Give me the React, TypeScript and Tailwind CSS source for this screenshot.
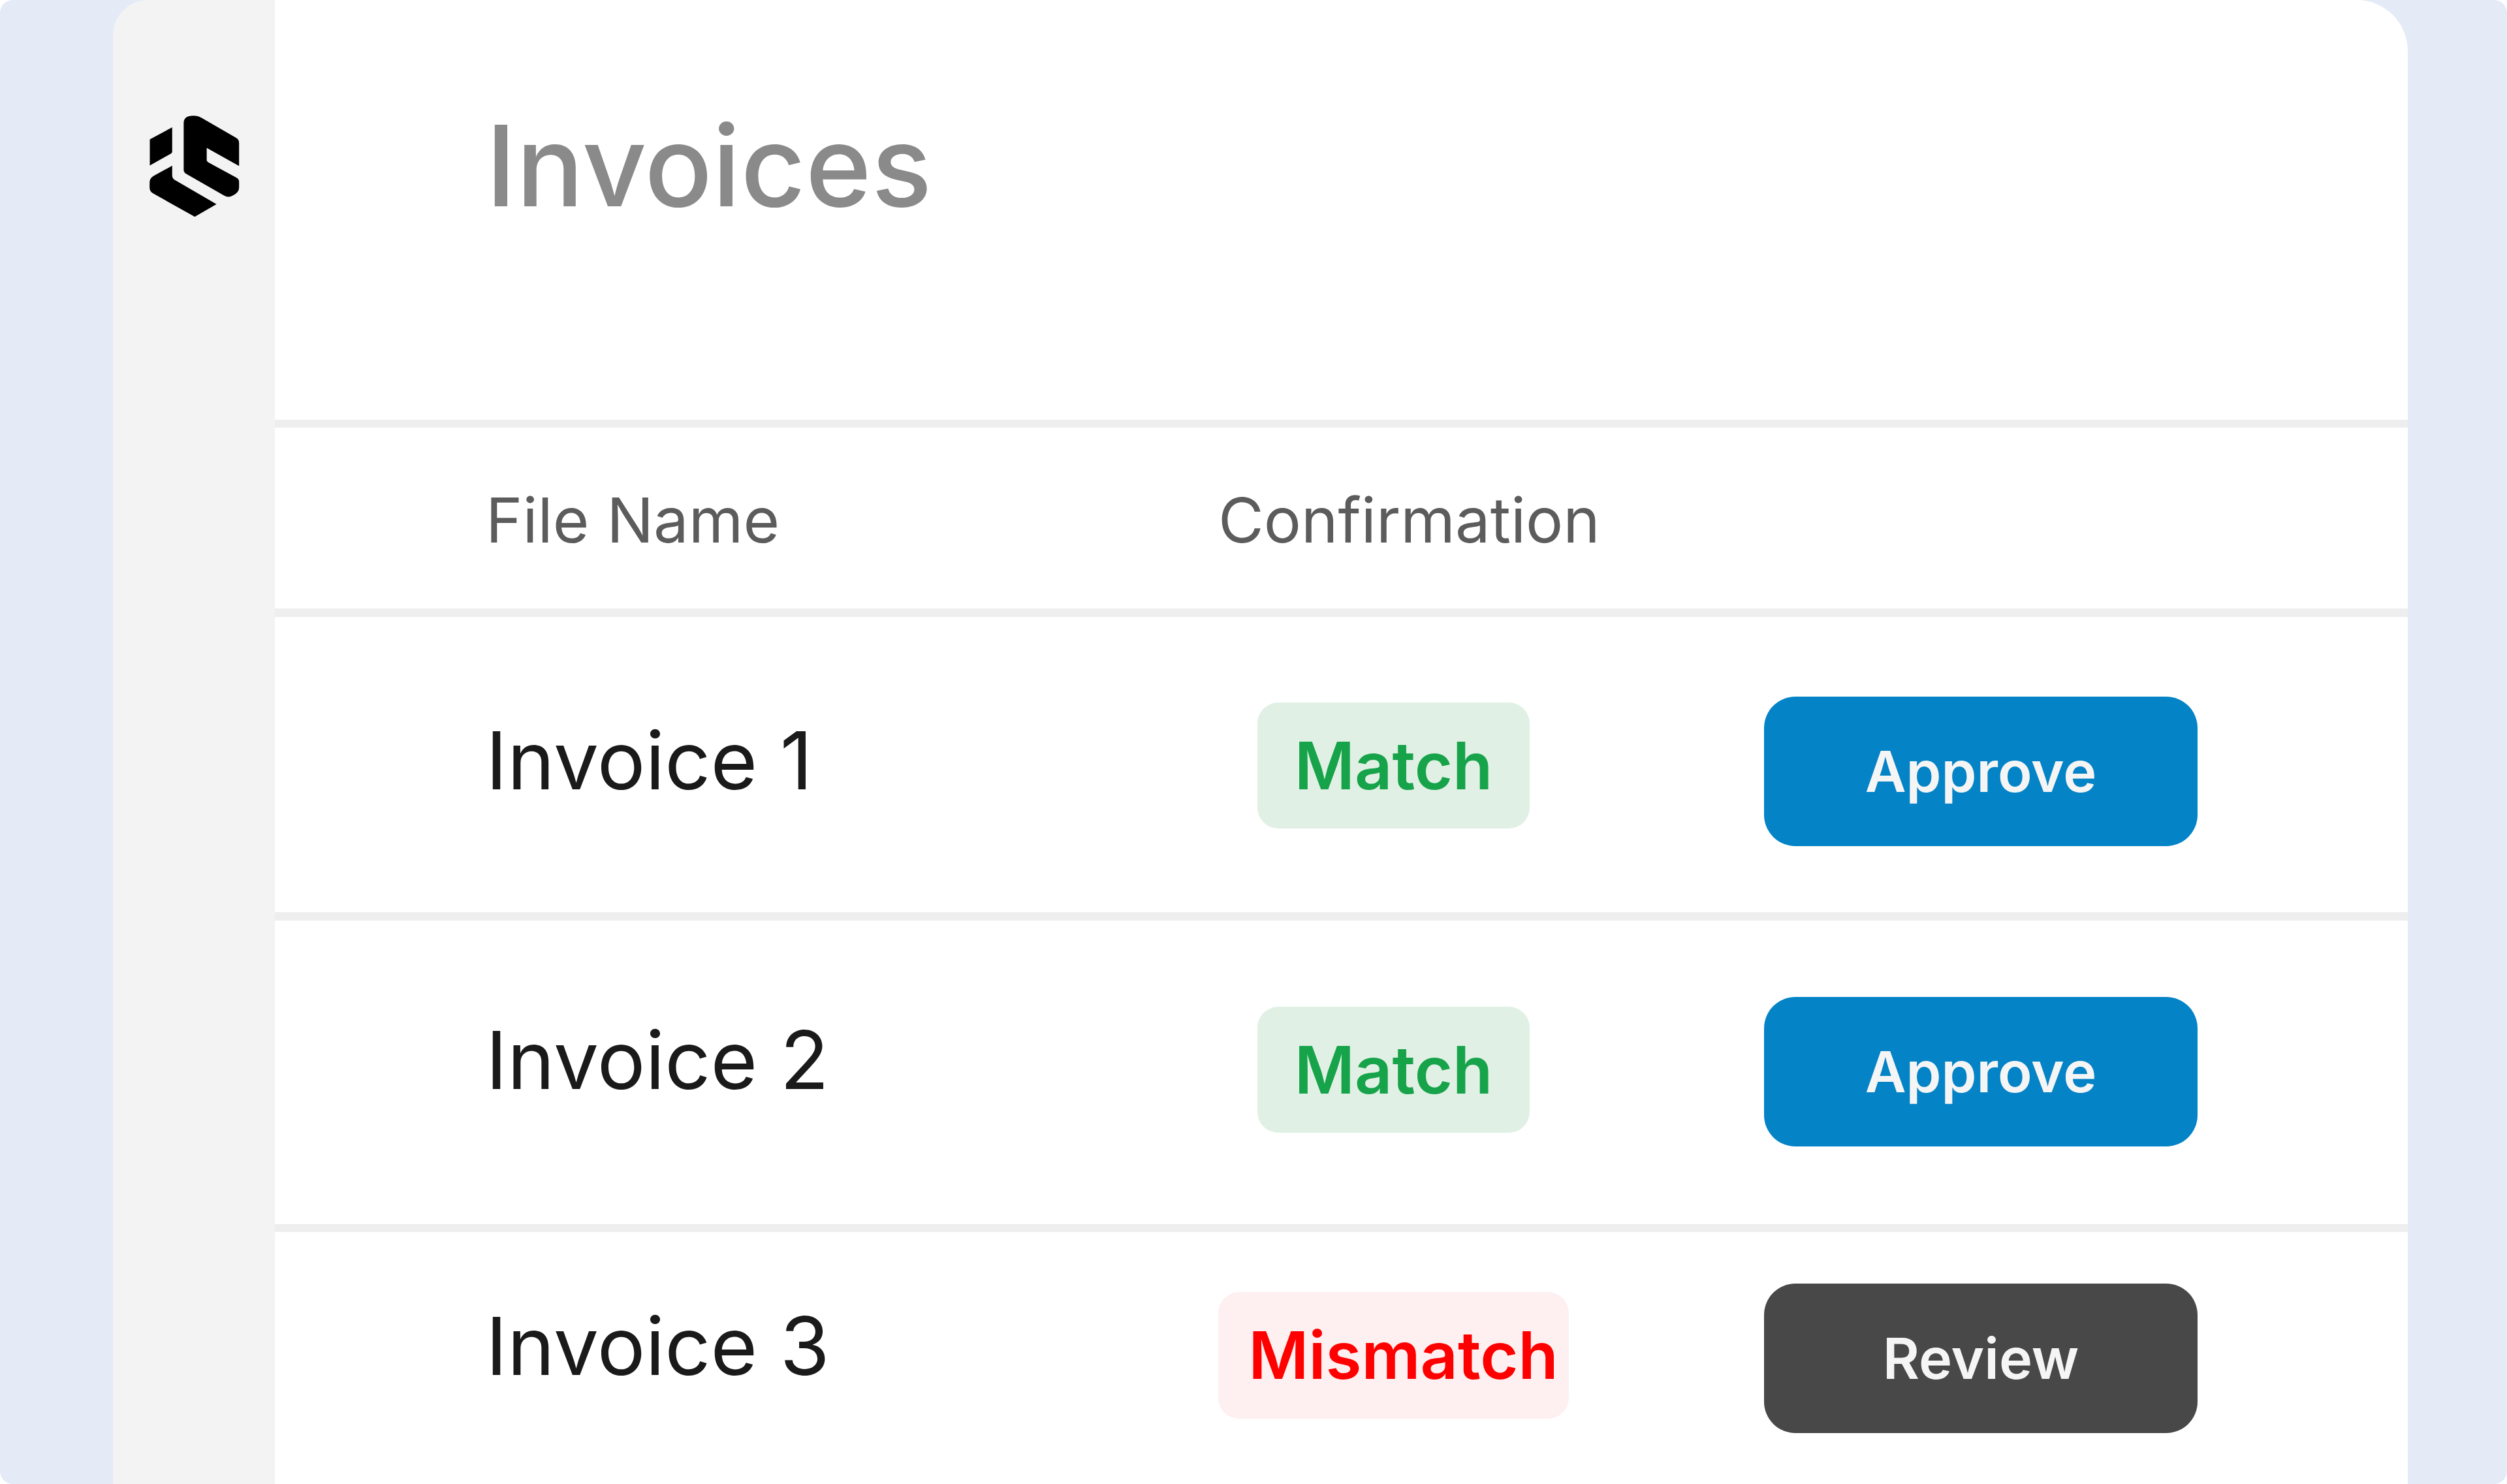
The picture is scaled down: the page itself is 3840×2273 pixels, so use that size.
const rows = [
  { name: "Invoice 1", status: "Match", action: "Approve", height: "h-[452px]", textTop: "pt-[141px]", badgeTop: "mt-[131px]", buttonTop: "mt-[122px]" },
  { name: "Invoice 2", status: "Match", action: "Approve", height: "h-[465px]", textTop: "pt-[135px]", badgeTop: "mt-[132px]", buttonTop: "mt-[117px]" },
  { name: "Invoice 3", status: "Mismatch", action: "Review", height: "h-[386px]", textTop: "pt-[96px]", badgeTop: "mt-[92px]", buttonTop: "mt-[79px]" },
];

function Logo() {
  return (
    <svg width="138" height="155" viewBox="207 530 414 466" fill="#000">
      <path d="M311 584 L208 640 V760 L300 708 Q311 703 311 695 Z" />
      <path d="M311 761 L225 808 Q207 818 207 840 V860 Q207 880 222 888 L415 996 L515 938 L325 828 Q311 820 311 805 Z" />
      <path d="M364 565 Q364 530 410 531 Q430 531 445 540 L605 632 Q619 640 619 655 V762 L470 679 V735 Q470 742 478 746 L605 815 Q619 822 619 835 V860 Q620 885 590 898 Q570 910 550 898 L378 800 Q364 792 364 780 Z" />
    </svg>
  );
}

export default function App() {
  return (
    <div className="h-[2273px] w-[3840px] overflow-hidden rounded-[20px] bg-[#e4eaf6] pl-[173px] pr-[152px] font-['Inter',sans-serif]">
      <div className="flex h-full overflow-hidden rounded-tl-[55px] rounded-tr-[78px] bg-white">
        <aside className="w-[248px] shrink-0 bg-[#f3f3f3] pl-[56px] pt-[177px]">
          <Logo />
        </aside>
        <main className="flex-1">
          <div className="h-[643px] pl-[323px] pt-[149px]">
            <h1 className="text-[172px] leading-[208px] font-medium text-[#8a8a8a]">Invoices</h1>
          </div>
          <div className="h-[12px] bg-[#eeeeee]" />
          <div className="grid h-[277px] grid-cols-[1122px_auto] pl-[323px] pt-[82px] text-[95.5px] leading-[118px] text-[#5c5c5c]">
            <div>File Name</div>
            <div>Confirmation</div>
          </div>
          <div className="h-[13px] bg-[#eeeeee]" />
          {rows.map((row, i) => (
            <div key={row.name}>
              <div className={`grid ${row.height} grid-cols-[1122px_537px_664px] gap-x-0 pl-[323px]`}>
                <div className={`${row.textTop} text-[123px] leading-[157px] text-[#1a1a1a]`}>{row.name}</div>
                <div className="flex justify-center">
                  {row.status === "Match" ? (
                    <span className={`${row.badgeTop} flex h-[193px] w-[417px] items-center justify-center rounded-[32px] bg-[#e1f0e4] text-[100px] font-semibold text-[#16a34a]`}>
                      {row.status}
                    </span>
                  ) : (
                    <span className={`${row.badgeTop} flex h-[194px] w-[537px] items-center justify-center rounded-[32px] bg-[#fef0f0] pl-[30px] text-[100px] font-semibold text-[#ff0000]`}>
                      {row.status}
                    </span>
                  )}
                </div>
                <div className="ml-[299px]">
                  <button
                    className={`${row.buttonTop} h-[229px] w-[664px] rounded-[48px] text-[86.5px] font-semibold text-[#f5f5f5] ${
                      row.action === "Approve" ? "bg-[#0483c6]" : "bg-[#484848]"
                    }`}
                  >
                    {row.action}
                  </button>
                </div>
              </div>
              {i === 0 && <div className="h-[13px] bg-[#eeeeee]" />}
              {i === 1 && <div className="h-[12px] bg-[#eeeeee]" />}
            </div>
          ))}
        </main>
      </div>
    </div>
  );
}
